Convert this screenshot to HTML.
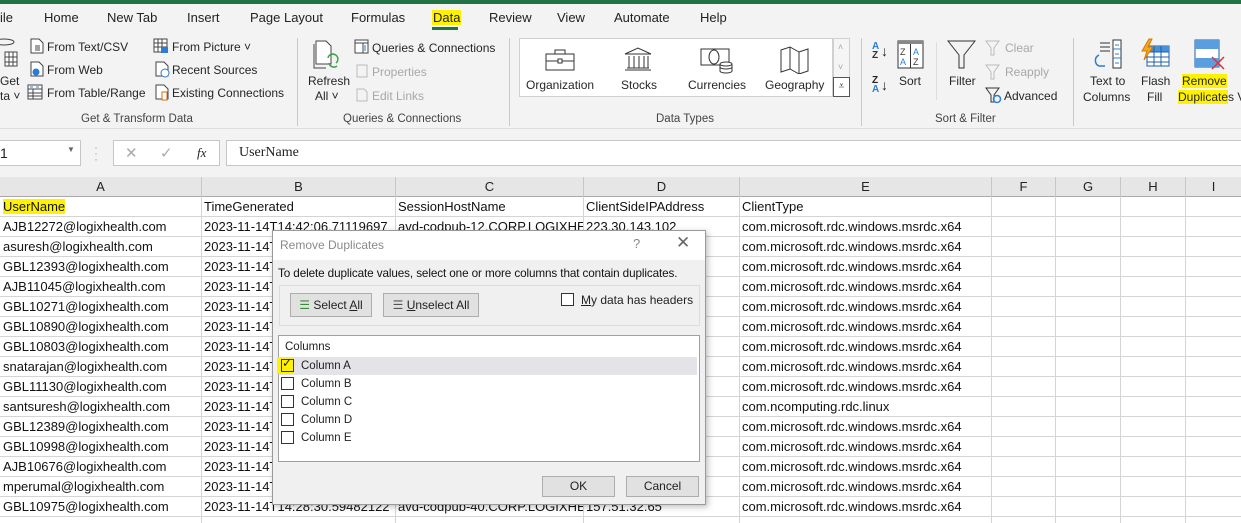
<!DOCTYPE html>
<html><head><meta charset="utf-8"><style>
*{margin:0;padding:0;box-sizing:border-box}
body{width:1241px;height:523px;overflow:hidden;background:#f3f3f3;font-family:"Liberation Sans",sans-serif;font-size:12px;color:#222;position:relative}
.a{position:absolute;white-space:nowrap}
.tab{font-size:13px;top:10px}
.rb{font-size:12px;color:#262626}
.dis{color:#a8a8a8}
.gl{font-size:11.5px;color:#444;top:113px}
.sep{position:absolute;width:1px;background:#c8c8c8;top:38px;height:88px}
.cell{position:absolute;height:20px;line-height:20px;font-size:13px;padding-left:3px;overflow:hidden;white-space:nowrap;color:#111}
.vl{position:absolute;width:1px;background:#d4d4d4;top:197px;height:326px}
.hl{position:absolute;height:1px;background:#d4d4d4;left:0;width:1241px}
.ch{position:absolute;top:177px;height:20px;line-height:20px;text-align:center;font-size:13px;color:#222;border-right:1px solid #c6c6c6}
.cb{position:absolute;width:13px;height:13px;border:1px solid #333;background:#fff}
.btn{position:absolute;background:#e1e1e1;border:1px solid #adadad;font-size:12px;text-align:center}
</style></head><body>
<div class="a" style="left:0;top:0;width:1241px;height:4px;background:#217346"></div>
<div class="a tab" style="left:0">ile</div>
<div class="a tab" style="left:44px">Home</div>
<div class="a tab" style="left:107px">New Tab</div>
<div class="a tab" style="left:187px">Insert</div>
<div class="a tab" style="left:250px">Page Layout</div>
<div class="a tab" style="left:351px">Formulas</div>
<div class="a tab" style="left:432px;background:#fff200;padding:0 1px">Data</div>
<div class="a" style="left:432px;top:27px;width:26px;height:3px;background:#217346"></div>
<div class="a tab" style="left:489px">Review</div>
<div class="a tab" style="left:557px">View</div>
<div class="a tab" style="left:614px">Automate</div>
<div class="a tab" style="left:700px">Help</div>

<svg class="a" style="left:0;top:38px" width="20" height="36"><ellipse cx="4" cy="4" rx="10" ry="3" fill="none" stroke="#444"/><rect x="5" y="14" width="12" height="14" fill="#fff" stroke="#444"/><path d="M5 19h12M5 24h12M9 14v14M13 14v14" stroke="#444"/></svg>
<div class="a rb" style="left:0;top:74px">Get</div>
<div class="a rb" style="left:0;top:89px">ta ˅</div>
<svg class="a" style="left:30px;top:38px" width="14" height="16"><path d="M1 1h8l4 4v10H1z" fill="#fff" stroke="#444"/><path d="M5 8h5M5 10h5M5 12h5" stroke="#444"/></svg>
<div class="a rb" style="left:47px;top:40px">From Text/CSV</div>
<svg class="a" style="left:30px;top:61px" width="14" height="16"><path d="M1 1h8l4 4v10H1z" fill="#fff" stroke="#444"/><circle cx="6" cy="11" r="3.5" fill="#2b7cd3"/></svg>
<div class="a rb" style="left:47px;top:63px">From Web</div>
<svg class="a" style="left:27px;top:84px" width="16" height="16"><rect x="1" y="1" width="14" height="14" fill="#fff" stroke="#444"/><path d="M1 5h14M1 9h14M1 12h14M6 5v10" stroke="#444"/><path d="M3 3h3M9 3h3" stroke="#2b7cd3"/></svg>
<div class="a rb" style="left:47px;top:86px">From Table/Range</div>
<svg class="a" style="left:153px;top:38px" width="16" height="16"><rect x="1" y="1" width="13" height="13" fill="#fff" stroke="#444"/><path d="M1 5h13M1 9h13M5 1v13M9 1v13" stroke="#444"/><rect x="8" y="9" width="7" height="6" fill="#2b7cd3"/></svg>
<div class="a rb" style="left:172px;top:40px">From Picture ˅</div>
<svg class="a" style="left:155px;top:61px" width="16" height="17"><path d="M1 1h8l4 4v10H1z" fill="#fff" stroke="#444"/><circle cx="10" cy="12" r="4" fill="#fff" stroke="#2b7cd3"/></svg>
<div class="a rb" style="left:172px;top:63px">Recent Sources</div>
<svg class="a" style="left:155px;top:84px" width="16" height="17"><path d="M1 1h8l4 4v10H1z" fill="#fff" stroke="#444"/><rect x="7" y="8" width="5" height="8" fill="#fff" stroke="#d86b0c"/></svg>
<div class="a rb" style="left:172px;top:86px">Existing Connections</div>
<div class="a gl" style="left:81px">Get &amp; Transform Data</div>
<div class="sep" style="left:297px"></div>

<svg class="a" style="left:313px;top:38px" width="28" height="34"><path d="M3 3h10l5 5v18H3z" fill="#fff" stroke="#444"/><path d="M1 6v24h12" fill="none" stroke="#444"/><path d="M15 20a5 5 0 1 1 8 5M24 28a5 5 0 0 1-8-3" fill="none" stroke="#3aa24a" stroke-width="1.5"/></svg>
<div class="a rb" style="left:308px;top:74px">Refresh</div>
<div class="a rb" style="left:315px;top:89px">All ˅</div>
<svg class="a" style="left:354px;top:39px" width="15" height="15"><rect x="1" y="1" width="13" height="13" fill="#fff" stroke="#444"/><path d="M1 4h13M9 4v10" stroke="#444"/><path d="M11 6v6" stroke="#2b7cd3"/></svg>
<div class="a rb" style="left:372px;top:41px">Queries &amp; Connections</div>
<svg class="a" style="left:356px;top:64px" width="12" height="14"><rect x="1" y="1" width="10" height="12" fill="none" stroke="#bbb"/></svg>
<div class="a rb dis" style="left:372px;top:65px">Properties</div>
<svg class="a" style="left:356px;top:88px" width="12" height="14"><path d="M1 1h7l3 3v9H1z" fill="none" stroke="#bbb"/></svg>
<div class="a rb dis" style="left:372px;top:89px">Edit Links</div>
<div class="a gl" style="left:343px">Queries &amp; Connections</div>
<div class="sep" style="left:509px"></div>

<div class="a" style="left:519px;top:38px;width:314px;height:59px;background:#fff;border:1px solid #d0d0d0"></div>
<div class="a" style="left:833px;top:38px;width:17px;height:59px;border:1px solid #d0d0d0;background:#f5f5f5"></div>
<div class="a" style="left:833px;top:77px;width:17px;height:20px;border:1px solid #555;background:#fff;font-size:10px;text-align:center;line-height:18px">⩡</div>
<div class="a dis" style="left:838px;top:42px;font-size:9px">˄</div>
<div class="a dis" style="left:838px;top:62px;font-size:9px">˅</div>
<svg class="a" style="left:545px;top:48px" width="32" height="24"><rect x="1" y="6" width="28" height="16" fill="none" stroke="#333"/><path d="M10 6V2h10v4M1 13h28" stroke="#333" fill="none"/><rect x="13" y="11" width="4" height="4" fill="#fff" stroke="#333"/></svg>
<div class="a rb" style="left:526px;top:78px">Organization</div>
<svg class="a" style="left:623px;top:46px" width="30" height="26"><path d="M2 8L15 2l13 6zM2 24h26M4 22h22M6 10v12M11 10v12M16 10v12M21 10v12M25 10v12" fill="none" stroke="#333"/></svg>
<div class="a rb" style="left:621px;top:78px">Stocks</div>
<svg class="a" style="left:700px;top:46px" width="34" height="28"><rect x="1" y="3" width="28" height="16" fill="none" stroke="#333"/><ellipse cx="14" cy="11" rx="5" ry="7" fill="none" stroke="#333"/><ellipse cx="26" cy="18" rx="6" ry="2" fill="#fff" stroke="#333"/><path d="M20 18v7a6 2 0 0 0 12 0v-7M20 21a6 2 0 0 0 12 0" fill="none" stroke="#333"/></svg>
<div class="a rb" style="left:688px;top:78px">Currencies</div>
<svg class="a" style="left:780px;top:46px" width="30" height="28"><path d="M1 4l9-3 9 5 9-3v22l-9 3-9-5-9 3z M10 1v22M19 6v22" fill="none" stroke="#333"/></svg>
<div class="a rb" style="left:765px;top:78px">Geography</div>
<div class="a gl" style="left:656px">Data Types</div>
<div class="sep" style="left:861px"></div>

<div class="a" style="left:872px;top:42px;font-size:10px;line-height:9px;color:#2b7cd3;font-weight:bold">A<br><span style="color:#333">Z</span></div>
<div class="a" style="left:881px;top:43px;font-size:14px">↓</div>
<div class="a" style="left:872px;top:76px;font-size:10px;line-height:9px;font-weight:bold">Z<br><span style="color:#2b7cd3">A</span></div>
<div class="a" style="left:881px;top:77px;font-size:14px">↓</div>
<svg class="a" style="left:897px;top:40px" width="27" height="29"><rect x="1" y="1" width="25" height="27" fill="#fff" stroke="#333"/><rect x="1" y="1" width="25" height="3" fill="#888"/><path d="M13.5 4v24" stroke="#333"/><text x="3" y="15" font-size="9" font-family="Liberation Sans" fill="#333">Z</text><text x="3" y="25" font-size="9" font-family="Liberation Sans" fill="#2b7cd3">A</text><text x="16" y="15" font-size="9" font-family="Liberation Sans" fill="#2b7cd3">A</text><text x="16" y="25" font-size="9" font-family="Liberation Sans" fill="#333">Z</text></svg>
<div class="a rb" style="left:899px;top:74px">Sort</div>
<div class="sep" style="left:936px;top:42px;height:58px;background:#ddd"></div>
<svg class="a" style="left:947px;top:40px" width="29" height="29"><path d="M1 1h27L17 15v13h-5V15z" fill="none" stroke="#333"/></svg>
<div class="a rb" style="left:949px;top:74px">Filter</div>
<svg class="a" style="left:985px;top:40px" width="16" height="16"><path d="M1 1h13L9 8v7H6V8z" fill="none" stroke="#bbb"/></svg>
<div class="a rb dis" style="left:1005px;top:41px">Clear</div>
<svg class="a" style="left:985px;top:64px" width="16" height="16"><path d="M1 1h13L9 8v7H6V8z" fill="none" stroke="#bbb"/></svg>
<div class="a rb dis" style="left:1005px;top:65px">Reapply</div>
<svg class="a" style="left:985px;top:87px" width="18" height="17"><path d="M1 1h13L9 8v7H6V8z" fill="none" stroke="#333"/><circle cx="12" cy="12" r="3.5" fill="none" stroke="#2b7cd3" stroke-width="1.5"/></svg>
<div class="a rb" style="left:1004px;top:89px">Advanced</div>
<div class="a gl" style="left:935px">Sort &amp; Filter</div>
<div class="sep" style="left:1073px"></div>

<svg class="a" style="left:1090px;top:39px" width="34" height="30"><path d="M10 4h10M10 8h10M10 12h10" stroke="#333"/><rect x="23" y="1" width="8" height="28" fill="#fff" stroke="#333"/><path d="M23 10h8M23 19h8M25 6h4M25 15h4M25 24h4" stroke="#2b7cd3"/><path d="M9 16a6 6 0 0 0 0 11h6" fill="none" stroke="#2b7cd3" stroke-width="1.5"/></svg>
<div class="a rb" style="left:1090px;top:74px">Text to</div>
<div class="a rb" style="left:1083px;top:90px">Columns</div>
<svg class="a" style="left:1139px;top:38px" width="32" height="30"><rect x="8" y="8" width="22" height="20" fill="#fff" stroke="#1b5fa8"/><rect x="8" y="8" width="22" height="6" fill="#4a90d9"/><path d="M8 14h22M8 19h22M8 24h22M15 8v20M22 8v20" stroke="#1b5fa8"/><path d="M10 1L3 13h5l-3 9 9-13h-5l4-8z" fill="#f5a623" stroke="#d07b00"/></svg>
<div class="a rb" style="left:1141px;top:74px">Flash</div>
<div class="a rb" style="left:1147px;top:90px">Fill</div>
<svg class="a" style="left:1194px;top:39px" width="32" height="32"><rect x="1" y="1" width="24" height="27" fill="#fff" stroke="#1b5fa8"/><rect x="1" y="1" width="24" height="9" fill="#5a9ee0"/><rect x="1" y="19" width="24" height="9" fill="#5a9ee0"/><path d="M18 18l12 12M30 18L18 30" stroke="#e03030" stroke-width="1.5"/></svg>
<div class="a rb" style="left:1182px;top:74px;background:#fff200">Remove</div>
<div class="a rb" style="left:1178px;top:90px"><span style="background:#fff200">Duplicate</span>s V</div>

<div class="a" style="left:0;top:128px;width:1241px;height:1px;background:#dedede"></div>

<div class="a" style="left:0;top:140px;width:81px;height:26px;background:#fff;border:1px solid #c6c6c6;border-left:none"></div>
<div class="a" style="left:0;top:145px;font-size:14px">1</div>
<div class="a" style="left:67px;top:145px;font-size:8px;color:#666">▼</div>
<div class="a" style="left:94px;top:144px;color:#aaa;font-size:12px;line-height:6px">·<br>·<br>·</div>
<div class="a" style="left:113px;top:140px;width:107px;height:26px;background:#fff;border:1px solid #c6c6c6"></div>
<div class="a" style="left:125px;top:144px;font-size:15px;color:#aaa">✕</div>
<div class="a" style="left:160px;top:144px;font-size:15px;color:#aaa">✓</div>
<div class="a" style="left:197px;top:145px;font-size:13px;font-style:italic;font-family:'Liberation Serif',serif">fx</div>
<div class="a" style="left:226px;top:140px;width:1015px;height:26px;background:#fff;border:1px solid #c6c6c6;border-right:none"></div>
<div class="a" style="left:239px;top:145px;font-size:14px;font-family:'Liberation Serif',serif">UserName</div>

<div class="a" style="left:0;top:177px;width:1241px;height:346px;background:#fff"></div>
<div class="a" style="left:0;top:177px;width:1241px;height:20px;background:#e6e6e6;border-bottom:1px solid #a8a8a8"></div>
<div class="ch" style="left:0;width:202px">A</div>
<div class="ch" style="left:202px;width:194px">B</div>
<div class="ch" style="left:396px;width:188px">C</div>
<div class="ch" style="left:584px;width:156px">D</div>
<div class="ch" style="left:740px;width:252px">E</div>
<div class="ch" style="left:992px;width:64px">F</div>
<div class="ch" style="left:1056px;width:65px">G</div>
<div class="ch" style="left:1121px;width:65px">H</div>
<div class="ch" style="left:1186px;width:55px;border:none">I</div>
<div class="vl" style="left:201px"></div><div class="vl" style="left:395px"></div><div class="vl" style="left:583px"></div><div class="vl" style="left:739px"></div><div class="vl" style="left:991px"></div><div class="vl" style="left:1055px"></div><div class="vl" style="left:1120px"></div><div class="vl" style="left:1185px"></div>
<div class="hl" style="top:216px"></div><div class="hl" style="top:236px"></div><div class="hl" style="top:256px"></div><div class="hl" style="top:276px"></div><div class="hl" style="top:296px"></div><div class="hl" style="top:316px"></div><div class="hl" style="top:336px"></div><div class="hl" style="top:356px"></div><div class="hl" style="top:376px"></div><div class="hl" style="top:396px"></div><div class="hl" style="top:416px"></div><div class="hl" style="top:436px"></div><div class="hl" style="top:456px"></div><div class="hl" style="top:476px"></div><div class="hl" style="top:496px"></div><div class="hl" style="top:516px"></div>

<div class="cell" style="left:0;top:197px;width:201px"><span style="background:#fff200">UserName</span></div>
<div class="cell" style="left:201px;top:197px;width:194px">TimeGenerated</div>
<div class="cell" style="left:395px;top:197px;width:188px">SessionHostName</div>
<div class="cell" style="left:583px;top:197px;width:156px">ClientSideIPAddress</div>
<div class="cell" style="left:739px;top:197px;width:252px">ClientType</div>
<div class="cell" style="left:0;top:217px;width:201px">AJB12272@logixhealth.com</div>
<div class="cell" style="left:201px;top:217px;width:194px">2023-11-14T14:42:06.71119697</div>
<div class="cell" style="left:395px;top:217px;width:188px">avd-codpub-12.CORP.LOGIXHE</div>
<div class="cell" style="left:583px;top:217px;width:156px">223.30.143.102</div>

<div class="cell" style="left:0;top:237px;width:201px">asuresh@logixhealth.com</div>
<div class="cell" style="left:0;top:257px;width:201px">GBL12393@logixhealth.com</div>
<div class="cell" style="left:0;top:277px;width:201px">AJB11045@logixhealth.com</div>
<div class="cell" style="left:0;top:297px;width:201px">GBL10271@logixhealth.com</div>
<div class="cell" style="left:0;top:317px;width:201px">GBL10890@logixhealth.com</div>
<div class="cell" style="left:0;top:337px;width:201px">GBL10803@logixhealth.com</div>
<div class="cell" style="left:0;top:357px;width:201px">snatarajan@logixhealth.com</div>
<div class="cell" style="left:0;top:377px;width:201px">GBL11130@logixhealth.com</div>
<div class="cell" style="left:0;top:397px;width:201px">santsuresh@logixhealth.com</div>
<div class="cell" style="left:0;top:417px;width:201px">GBL12389@logixhealth.com</div>
<div class="cell" style="left:0;top:437px;width:201px">GBL10998@logixhealth.com</div>
<div class="cell" style="left:0;top:457px;width:201px">AJB10676@logixhealth.com</div>
<div class="cell" style="left:0;top:477px;width:201px">mperumal@logixhealth.com</div>
<div class="cell" style="left:0;top:497px;width:201px">GBL10975@logixhealth.com</div>
<div class="cell" style="left:201px;top:237px;width:80px">2023-11-14T</div>
<div class="cell" style="left:201px;top:257px;width:80px">2023-11-14T</div>
<div class="cell" style="left:201px;top:277px;width:80px">2023-11-14T</div>
<div class="cell" style="left:201px;top:297px;width:80px">2023-11-14T</div>
<div class="cell" style="left:201px;top:317px;width:80px">2023-11-14T</div>
<div class="cell" style="left:201px;top:337px;width:80px">2023-11-14T</div>
<div class="cell" style="left:201px;top:357px;width:80px">2023-11-14T</div>
<div class="cell" style="left:201px;top:377px;width:80px">2023-11-14T</div>
<div class="cell" style="left:201px;top:397px;width:80px">2023-11-14T</div>
<div class="cell" style="left:201px;top:417px;width:80px">2023-11-14T</div>
<div class="cell" style="left:201px;top:437px;width:80px">2023-11-14T</div>
<div class="cell" style="left:201px;top:457px;width:80px">2023-11-14T</div>
<div class="cell" style="left:201px;top:477px;width:80px">2023-11-14T</div>
<div class="cell" style="left:201px;top:497px;width:194px">2023-11-14T14:28:30.59482122</div>
<div class="cell" style="left:395px;top:497px;width:188px">avd-codpub-40.CORP.LOGIXHE</div>
<div class="cell" style="left:583px;top:497px;width:156px">157.51.32.65</div>

<div class="cell" style="left:739px;top:217px;width:252px">com.microsoft.rdc.windows.msrdc.x64</div>
<div class="cell" style="left:739px;top:237px;width:252px">com.microsoft.rdc.windows.msrdc.x64</div>
<div class="cell" style="left:739px;top:257px;width:252px">com.microsoft.rdc.windows.msrdc.x64</div>
<div class="cell" style="left:739px;top:277px;width:252px">com.microsoft.rdc.windows.msrdc.x64</div>
<div class="cell" style="left:739px;top:297px;width:252px">com.microsoft.rdc.windows.msrdc.x64</div>
<div class="cell" style="left:739px;top:317px;width:252px">com.microsoft.rdc.windows.msrdc.x64</div>
<div class="cell" style="left:739px;top:337px;width:252px">com.microsoft.rdc.windows.msrdc.x64</div>
<div class="cell" style="left:739px;top:357px;width:252px">com.microsoft.rdc.windows.msrdc.x64</div>
<div class="cell" style="left:739px;top:377px;width:252px">com.microsoft.rdc.windows.msrdc.x64</div>
<div class="cell" style="left:739px;top:397px;width:252px">com.ncomputing.rdc.linux</div>
<div class="cell" style="left:739px;top:417px;width:252px">com.microsoft.rdc.windows.msrdc.x64</div>
<div class="cell" style="left:739px;top:437px;width:252px">com.microsoft.rdc.windows.msrdc.x64</div>
<div class="cell" style="left:739px;top:457px;width:252px">com.microsoft.rdc.windows.msrdc.x64</div>
<div class="cell" style="left:739px;top:477px;width:252px">com.microsoft.rdc.windows.msrdc.x64</div>
<div class="cell" style="left:739px;top:497px;width:252px">com.microsoft.rdc.windows.msrdc.x64</div>

<div class="a" style="left:272px;top:230px;width:434px;height:275px;background:#f0f0f0;border:1px solid #999;box-shadow:2px 2px 6px rgba(0,0,0,.25)"></div>
<div class="a" style="left:273px;top:231px;width:432px;height:29px;background:#fff"></div>
<div class="a" style="left:280px;top:238px;font-size:12px;color:#8a8a8a">Remove Duplicates</div>
<div class="a" style="left:633px;top:236px;font-size:13px;color:#888">?</div>
<div class="a" style="left:676px;top:233px;font-size:17px;color:#666">✕</div>
<div class="a" style="left:278px;top:267px;font-size:11.7px;letter-spacing:-0.1px;color:#111">To delete duplicate values, select one or more columns that contain duplicates.</div>
<div class="a" style="left:279px;top:285px;width:421px;height:41px;border:1px solid #dcdcdc"></div>
<div class="btn" style="left:290px;top:293px;width:82px;height:24px;line-height:22px"><span style="color:#3a8a3a">☰</span> Select <u>A</u>ll</div>
<div class="btn" style="left:383px;top:293px;width:96px;height:24px;line-height:22px"><span style="color:#555">☰</span> <u>U</u>nselect All</div>
<div class="cb" style="left:561px;top:293px"></div>
<div class="a" style="left:581px;top:293px;font-size:12px"><u>M</u>y data has headers</div>
<div class="a" style="left:278px;top:335px;width:422px;height:127px;background:#fff;border:1px solid #a0a0a0"></div>
<div class="a" style="left:285px;top:341px;font-size:11.5px">Columns</div>
<div class="a" style="left:279px;top:357px;width:418px;height:18px;background:#e4e4e8"></div>
<div class="a" style="left:277px;top:357px;width:17px;height:17px;background:#fff200"></div>
<div class="cb" style="left:281px;top:359px;background:transparent"></div>
<div class="a" style="left:282px;top:356px;font-size:12px">✓</div>
<div class="a" style="left:301px;top:360px;font-size:11.5px">Column A</div>
<div class="cb" style="left:281px;top:377px"></div><div class="a" style="left:301px;top:378px;font-size:11.5px">Column B</div>
<div class="cb" style="left:281px;top:395px"></div><div class="a" style="left:301px;top:396px;font-size:11.5px">Column C</div>
<div class="cb" style="left:281px;top:413px"></div><div class="a" style="left:301px;top:414px;font-size:11.5px">Column D</div>
<div class="cb" style="left:281px;top:431px"></div><div class="a" style="left:301px;top:432px;font-size:11.5px">Column E</div>
<div class="btn" style="left:542px;top:476px;width:73px;height:21px;line-height:19px">OK</div>
<div class="btn" style="left:626px;top:476px;width:73px;height:21px;line-height:19px">Cancel</div>
</body></html>
